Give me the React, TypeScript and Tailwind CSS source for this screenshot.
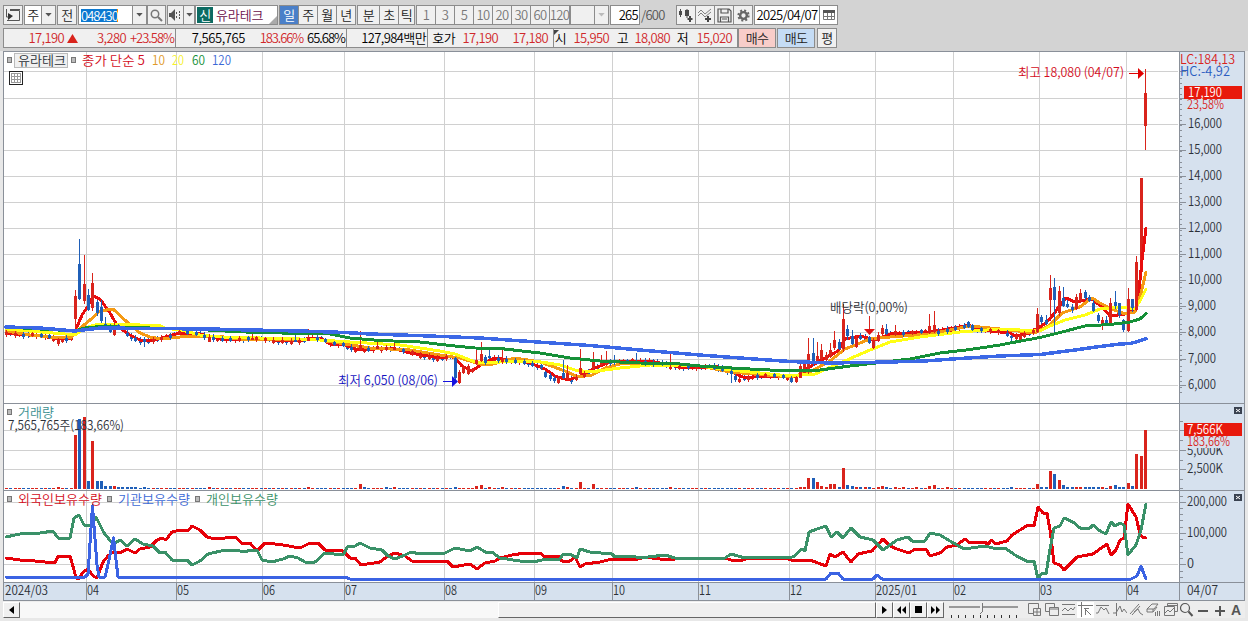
import React from "react";

type Pt = [number, number];
type Candle = [number, number, number, number, number, string];

const RED = "#d9241c";
const BLUE = "#1f5fb8";
const FONT = '"Noto Sans CJK KR", sans-serif';

const gridX = [86.5, 176.5, 262.5, 344.5, 444.5, 534.5, 612.5, 698.5, 789.5, 875.5, 953.5, 1039.5, 1126.5];
const priceY = [71.5, 98.5, 124.5, 150.5, 176.5, 202.5, 228.5, 254.5, 280.5, 306.5, 332.5, 359.5, 385.5];
const volumeY = [430.5, 450.5, 469.5];
const holdY = [502.5, 533.5, 564.5];
const months = ["04", "05", "06", "07", "08", "09", "10", "11", "12", "2025/01", "02", "03", "04"];

const ma5: Pt[] = [[6, 333], [40, 336], [60, 339], [70, 338], [76, 329], [82, 315], [88, 306], [93, 296], [100, 299], [110, 313], [118, 327], [130, 335], [140, 340], [150, 341], [165, 337], [180, 333], [200, 334], [220, 339], [250, 339], [300, 341], [310, 338], [320, 338], [330, 344], [345, 345], [355, 349], [375, 349], [392, 348], [410, 353], [440, 358], [450, 356], [456, 359], [462, 366], [472, 371], [482, 364], [495, 358], [510, 360], [530, 363], [545, 369], [555, 376], [568, 380], [580, 376], [595, 368], [610, 362], [650, 361], [680, 367], [700, 368], [715, 366], [730, 371], [745, 378], [760, 376], [790, 377], [800, 375], [808, 368], [825, 358], [838, 351], [845, 339], [860, 336], [875, 340], [890, 334], [930, 332], [960, 327], [968, 325], [980, 330], [1010, 333], [1015, 336], [1030, 333], [1043, 325], [1050, 319], [1058, 308], [1066, 298], [1075, 302], [1092, 299], [1102, 307], [1110, 316], [1125, 314], [1136, 310], [1139, 290], [1142, 260], [1146, 228]];
const ma10: Pt[] = [[6, 331], [30, 335], [50, 337], [70, 338], [78, 330], [90, 320], [100, 311], [113, 309], [127, 322], [140, 333], [150, 337], [162, 339], [180, 337], [215, 336], [240, 339], [300, 340], [320, 340], [345, 344], [370, 348], [410, 350], [440, 355], [460, 358], [480, 364], [490, 365], [500, 362], [515, 358], [540, 362], [565, 371], [578, 377], [592, 375], [605, 368], [620, 364], [640, 363], [700, 366], [730, 372], [790, 377], [810, 372], [830, 361], [845, 349], [860, 343], [870, 339], [890, 337], [930, 334], [970, 326], [1000, 329], [1035, 333], [1050, 325], [1062, 313], [1080, 307], [1092, 298], [1100, 303], [1112, 309], [1125, 314], [1135, 312], [1141, 293], [1146, 272]];
const ma20: Pt[] = [[6, 329], [40, 332], [65, 334], [75, 335], [85, 328], [95, 325], [110, 324], [140, 325], [158, 325], [165, 328], [185, 331], [200, 335], [220, 337], [300, 339], [320, 340], [350, 342], [400, 345], [440, 351], [455, 354], [475, 362], [490, 363], [510, 361], [535, 361], [560, 365], [575, 370], [590, 372], [620, 368], [650, 365], [700, 366], [740, 371], [790, 376], [815, 374], [840, 363], [870, 350], [890, 342], [920, 337], [960, 332], [1000, 329], [1020, 330], [1040, 331], [1050, 326], [1065, 320], [1085, 315], [1100, 309], [1120, 307], [1135, 309], [1141, 299], [1146, 289]];
const ma60: Pt[] = [[6, 327], [40, 329], [75, 331], [85, 328], [100, 326.5], [150, 328], [200, 329.5], [225, 331], [245, 332], [300, 333.5], [330, 334], [350, 338], [380, 340.5], [420, 342], [450, 345.5], [475, 348], [500, 348.5], [540, 353], [570, 358], [600, 361], [640, 363], [680, 364], [700, 366], [740, 368.5], [790, 371], [820, 370], [850, 366], [880, 362.5], [910, 359], [940, 353], [970, 349.5], [1000, 345], [1010, 343], [1040, 337.5], [1060, 332.5], [1085, 326], [1110, 324.5], [1130, 322], [1140, 319], [1146, 313.5]];
const ma120: Pt[] = [[6, 327], [40, 328], [75, 331], [100, 328], [150, 328.5], [210, 329], [250, 330], [300, 331], [345, 332.5], [370, 334], [430, 336], [480, 338], [530, 341.5], [590, 345.5], [640, 350], [700, 355], [740, 358], [790, 361.5], [830, 363], [890, 362], [925, 361], [960, 358.5], [1000, 356], [1040, 354.5], [1075, 350], [1100, 346.5], [1120, 344], [1130, 343.5], [1138, 341.5], [1146, 338.5]];

const foreign: Pt[] = [[6, 558], [20, 560], [35, 561], [55, 563], [58, 556], [70, 556], [74, 570], [76, 578], [79, 579], [83, 572], [88, 569], [93, 576], [97, 578], [103, 562], [108, 556], [113, 552], [120, 553], [127, 549], [135, 553], [140, 549], [150, 547], [157, 540], [162, 538], [166, 540], [172, 532], [180, 530], [188, 531], [192, 526], [200, 530], [207, 537], [215, 539], [235, 537], [243, 544], [250, 543], [257, 551], [265, 543], [275, 544], [283, 545], [300, 548], [310, 543], [318, 543], [325, 550], [343, 551], [350, 558], [355, 558], [361, 565], [380, 562], [388, 556], [395, 553], [405, 556], [412, 561], [430, 562], [447, 561], [453, 567], [470, 564], [477, 569], [485, 563], [495, 561], [500, 558], [512, 555], [525, 553], [540, 553], [545, 557], [558, 556], [562, 561], [570, 561], [575, 557], [580, 567], [585, 564], [600, 562], [612, 559], [635, 560], [645, 557], [660, 559], [675, 559], [690, 558], [725, 558], [731, 560], [743, 560], [748, 558], [785, 558], [795, 561], [810, 560], [826, 566], [830, 554], [835, 557], [843, 552], [851, 562], [858, 554], [872, 551], [883, 539], [890, 546], [897, 549], [909, 553], [915, 549], [926, 549], [930, 556], [940, 553], [947, 547], [957, 545], [965, 539], [970, 543], [985, 542], [988, 545], [991, 540], [996, 544], [1007, 541], [1012, 535], [1020, 530], [1028, 525], [1034, 526], [1038, 507], [1043, 513], [1047, 513], [1050, 530], [1054, 563], [1060, 565], [1064, 570], [1077, 557], [1093, 554], [1107, 544], [1111, 555], [1116, 550], [1120, 540], [1124, 538], [1128, 504], [1136, 517], [1140, 534], [1142, 537], [1146, 538]];
const personal: Pt[] = [[6, 537], [20, 534], [40, 533], [53, 531], [58, 538], [70, 538], [74, 518], [79, 515], [84, 525], [88, 526], [92, 524], [96, 517], [104, 533], [113, 544], [120, 540], [127, 546], [135, 539], [143, 544], [153, 546], [160, 553], [165, 552], [172, 560], [180, 561], [187, 560], [192, 565], [200, 561], [208, 554], [225, 550], [235, 550], [245, 552], [250, 550], [257, 550], [262, 560], [272, 562], [283, 559], [290, 556], [298, 558], [305, 562], [315, 562], [325, 553], [343, 555], [348, 546], [355, 546], [360, 543], [370, 548], [382, 550], [388, 556], [395, 559], [405, 555], [411, 552], [420, 554], [430, 553], [445, 553], [455, 548], [470, 551], [477, 547], [487, 553], [492, 552], [500, 558], [520, 561], [533, 562], [547, 559], [560, 559], [563, 554], [570, 554], [577, 558], [580, 549], [590, 552], [612, 554], [615, 557], [632, 556], [640, 558], [665, 555], [675, 558], [725, 558], [731, 554], [745, 558], [793, 557], [802, 549], [805, 551], [809, 532], [820, 528], [826, 526], [831, 537], [837, 532], [843, 538], [851, 528], [860, 537], [873, 540], [883, 550], [890, 545], [897, 540], [908, 537], [912, 541], [925, 541], [930, 533], [940, 535], [950, 541], [964, 549], [985, 546], [993, 548], [1005, 548], [1015, 555], [1028, 562], [1034, 561], [1038, 579], [1042, 573], [1046, 574], [1050, 549], [1054, 528], [1060, 526], [1064, 518], [1073, 522], [1080, 528], [1090, 528], [1093, 525], [1100, 531], [1106, 534], [1111, 522], [1115, 526], [1120, 523], [1124, 525], [1128, 555], [1136, 545], [1141, 530], [1146, 504]];
const institution: Pt[] = [[6, 577], [85, 577], [88, 574], [92.5, 506], [97, 565], [99, 577], [105, 577], [109, 560], [113.5, 538], [118, 577], [345, 577], [350, 579], [826, 579], [831, 573], [838, 573], [843, 579], [873, 579], [877, 575], [882, 579], [1131, 579], [1137, 576], [1141, 566], [1146, 579]];

// x, high, body top, body bottom, low, colour
const bigCandles: Candle[] = [
  [57, 338, 340, 344, 346, RED], [75.5, 290, 296, 319, 328, RED], [79.5, 239, 264, 299, 300, BLUE], [83.5, 255, 284, 301, 304, RED],
  [88.5, 289, 295, 310, 311, BLUE], [92.5, 273, 283, 308, 311, RED], [96.5, 300, 302, 313, 316, BLUE], [100.5, 300, 307, 321, 323, BLUE],
  [105.5, 317, 324, 329, 330, BLUE], [109.5, 324, 327, 332, 333, BLUE], [113.5, 321, 326, 335, 336, RED], [144.5, 337, 339, 342, 347, BLUE],
  [209, 334, 337, 342, 342, RED], [252, 333, 338, 340, 340, RED], [295, 335, 340, 342, 342, BLUE], [308, 329, 338, 341, 341, RED],
  [359, 331, 345, 350, 350, RED], [377, 342, 346, 349, 349, RED], [394, 342, 348, 350, 350, RED], [454.5, 357, 358, 378, 380, BLUE],
  [459, 370, 372, 383, 384, RED], [463.5, 365, 367, 373, 374, RED], [467.5, 364, 366, 374, 375, RED], [476, 347, 360, 364, 365, RED],
  [480.5, 342, 354, 361, 362, RED], [485, 355, 357, 363, 365, BLUE], [489.5, 347, 356, 358, 359, BLUE], [502.5, 348, 358, 362, 364, RED],
  [545, 371, 372, 377, 378, BLUE], [550, 373, 375, 379, 381, BLUE], [554, 376, 378, 381, 383, BLUE], [558, 376, 378, 383, 384, RED],
  [562.5, 360, 373, 378, 379, BLUE], [567, 365, 373, 379, 380, RED], [580, 349, 368, 374, 375, RED], [592.5, 352, 362, 369, 370, RED],
  [601, 355, 361, 365, 366, RED], [605.5, 351, 360, 365, 366, RED], [614, 355, 361, 363, 365, BLUE], [636, 353, 361, 363, 364, BLUE],
  [670, 354, 367, 369, 370, RED], [731.5, 368, 371, 374, 383, BLUE], [736, 374, 376, 380, 382, BLUE], [740, 377, 379, 382, 383, RED],
  [791.5, 376, 378, 382, 383, BLUE], [796, 376, 377, 382, 383, RED], [800, 363, 366, 378, 378, RED], [804, 361, 364, 373, 373, RED],
  [808.5, 338, 354, 372, 374, RED], [813, 338, 353, 362, 366, BLUE], [817, 342, 356, 363, 364, RED], [821.5, 344, 350, 359, 360, RED],
  [826, 352, 355, 360, 361, RED], [830, 343, 350, 357, 358, RED], [834.5, 331, 340, 348, 350, RED], [839, 339, 342, 349, 350, BLUE],
  [843.5, 304, 319, 349, 352, RED], [847.5, 325, 329, 336, 340, BLUE], [852, 330, 336, 344, 345, BLUE], [856, 335, 338, 347, 348, RED],
  [869, 336, 337, 343, 344, BLUE], [873, 338, 340, 348, 349, RED], [877.5, 332, 335, 341, 342, RED], [882, 325, 328, 334, 336, RED],
  [886.5, 324, 329, 334, 335, BLUE], [895, 325, 331, 335, 336, RED], [929.5, 314, 326, 333, 334, RED], [933.5, 311, 325, 332, 333, RED],
  [968, 321, 322, 327, 328, BLUE], [972, 324, 325, 330, 331, BLUE], [1012, 335, 336, 338, 342, BLUE], [1021, 334, 335, 340, 341, RED],
  [1037.5, 308, 314, 332, 333, RED], [1041.5, 315, 317, 322, 324, BLUE], [1046, 315, 320, 324, 325, BLUE], [1050.5, 275, 288, 300, 318, RED],
  [1054.5, 278, 287, 300, 334, BLUE], [1059, 286, 291, 313, 316, RED], [1063.5, 287, 298, 306, 307, BLUE], [1067.5, 300, 304, 307, 308, BLUE],
  [1072, 304, 307, 310, 313, BLUE], [1076, 294, 297, 309, 310, RED], [1080.5, 289, 293, 301, 303, RED], [1085, 290, 292, 298, 300, BLUE],
  [1089, 295, 297, 301, 302, BLUE], [1093.5, 300, 303, 311, 312, BLUE], [1097.5, 313, 315, 321, 323, BLUE], [1102, 317, 320, 325, 330, RED],
  [1106, 316, 320, 323, 324, BLUE], [1110.5, 298, 303, 323, 325, RED], [1115, 291, 302, 306, 309, BLUE], [1119, 303, 303, 315, 318, BLUE],
  [1123.5, 319, 320, 330, 332, BLUE], [1128, 288, 299, 331, 332, RED], [1132, 299, 299, 308, 312, BLUE], [1136.5, 256, 262, 310, 311, RED],
  [1141, 178, 178, 272, 272, RED], [1145.5, 69, 93, 126, 150, RED],
];

// x, top of the bar, colour
const bigVolumes: [number, number, string][] = [
  [75.5, 435, RED], [79.5, 419, BLUE], [83.5, 417, RED], [88.5, 481, BLUE], [92.5, 441, RED], [96.5, 481, BLUE], [100.5, 481, BLUE],
  [105, 486, BLUE], [109.5, 486, BLUE], [113.5, 486, RED], [118, 487, BLUE], [122, 487, BLUE], [127, 487, BLUE], [131, 487, BLUE], [135.5, 487, BLUE],
  [144.5, 487, BLUE], [57, 487, RED], [208, 487, RED], [308, 487, RED], [359.5, 484, RED], [364, 487, BLUE], [385, 487, BLUE], [394, 487, RED],
  [454.5, 487, BLUE], [476, 486, RED], [480.5, 485, RED], [489, 487, RED], [502.5, 487, RED], [562.5, 486, BLUE], [567, 487, RED], [580, 482, RED],
  [592.5, 484, RED], [636, 487, BLUE], [670, 487, RED], [800, 487, RED], [804, 487, RED], [808.5, 478, RED], [813, 478, BLUE], [817.5, 482, RED],
  [821.5, 486, RED], [826, 487, RED], [830.5, 484, RED], [834.5, 484, RED], [839, 487, BLUE], [843.5, 468, RED], [847.5, 485, BLUE], [852, 486, BLUE],
  [856, 487, RED], [860, 487, BLUE], [865, 487, RED], [869, 487, BLUE], [878, 487, RED], [882.5, 486, RED], [886.5, 487, BLUE], [895, 487, RED],
  [904, 487, RED], [916, 487, RED], [929.5, 486, RED], [933.5, 485, RED], [946, 487, RED], [1012, 487, BLUE], [1037.5, 484, RED], [1041.5, 487, BLUE],
  [1046, 487, BLUE], [1050.5, 471, RED], [1054.5, 474, BLUE], [1059, 480, RED], [1063.5, 485, BLUE], [1067.5, 487, BLUE], [1072, 487, BLUE],
  [1076, 487, RED], [1080.5, 487, RED], [1085, 487, BLUE], [1089, 487, BLUE], [1093.5, 487, BLUE], [1097.5, 487, BLUE], [1102, 487, RED],
  [1110.5, 486, RED], [1115, 485, BLUE], [1119, 487, BLUE], [1123.5, 487, BLUE], [1128, 483, RED], [1132, 486, BLUE], [1136.5, 454, RED],
  [1141, 456, RED], [1145.5, 430, RED],
];

const toIndex = (x: number) => Math.round((x - 6.5) / 4.3144);
const toX = (i: number) => Math.round(6 + i * 4.3144);

const at = (pts: Pt[], x: number) => {
  for (let i = 1; i < pts.length; i++) {
    if (x <= pts[i][0]) {
      const [x0, y0] = pts[i - 1];
      const [x1, y1] = pts[i];
      return y0 + ((x - x0) / (x1 - x0)) * (y1 - y0);
    }
  }
  return pts[pts.length - 1][1];
};

const bars = Array.from({ length: 265 }, (_, i) => {
  const x = toX(i);
  const r = (i * 7919 + 13) % 17;
  const color = r % 5 < 2 || at(ma5, x + 6) > at(ma5, x) + 1 ? BLUE : RED;
  const mid = Math.round(at(ma5, x) + (r % 3) - 1);
  const big = bigCandles.find((c) => toIndex(c[0]) === i);
  const candle = big || [x, mid - 2 - (r % 3), mid - 1, mid + 2, mid + 3 + (r % 2), color];
  const volume = bigVolumes.find((v) => toIndex(v[0]) === i) || [x, 488, candle[5]];
  return { x, big: !!big, candle: candle as Candle, volume: volume as [number, number, string] };
});

const Line = ({ pts, color, w = 3 }: { pts: Pt[]; color: string; w?: number }) => (
  <polyline points={pts.map((p) => p.join(",")).join(" ")} fill="none" stroke={color} strokeWidth={w} strokeLinejoin="round" strokeLinecap="round" />
);

type TxtProps = { x: number; y: number; w: number; color?: string; children: string };

const Txt = ({ x, y, w, color = "#2c3038", children }: TxtProps) => (
  <text x={x} y={y} textLength={w} lengthAdjust="spacingAndGlyphs" fill={color} fontSize={13} fontWeight={350} fontFamily={FONT}>
    {children}
  </text>
);

const Mark = ({ x, y }: { x: number; y: number }) => (
  <rect x={x + 0.5} y={y + 0.5} width={4} height={5} fill="#bbb" stroke="#777" shapeRendering="crispEdges" />
);

const Close = ({ y }: { y: number }) => (
  <g>
    <rect x={1234} y={y} width={8} height={7} fill="#39414f" />
    <path d={`M1236 ${y + 2}l4 3m0-3l-4 3`} stroke="#fff" />
  </g>
);

const Chart = () => (
  <svg width={1242} height={550} viewBox="3 51 1242 550" className="block overflow-visible">
    <rect x={3} y={51} width={1176} height={532} fill="#fff" />
    <rect x={1179} y={51} width={65} height={550} fill="#d6e1ee" />
    <rect x={3} y={583} width={1241} height={18} fill="#d6e1ee" />
    <g stroke="#d0d0d0" shapeRendering="crispEdges">
      {[...priceY, ...volumeY, ...holdY].map((y) => (
        <path key={y} d={`M4 ${y}H1178`} />
      ))}
      {gridX.map((x) => (
        <path key={x} d={`M${x} 52V582`} />
      ))}
    </g>
    <g stroke="#8a9099" shapeRendering="crispEdges">
      <path d="M3.5 51V601M3 51.5H1244M1244.5 51V601M1179.5 51V601M3 403.5H1244M3 490.5H1244M3 582.5H1244M3 600.5H1244" fill="none" />
      {gridX.map((x) => (
        <path key={x} d={`M${x} 583V600`} />
      ))}
      {[...priceY, ...volumeY, ...holdY].map((y) => (
        <path key={y} d={`M1180 ${y}H1186`} />
      ))}
      {Array.from({ length: 61 }, (_, i) => (
        <path key={i} d={`M1180 ${Math.round(78 + i * 5.23) + 0.5}h2`} />
      ))}
      {[421, 440, 460, 479, 488, 496, 508, 514, 520, 527, 539, 546, 552, 558, 571, 577].map((y) => (
        <path key={y} d={`M1180 ${y + 0.5}h3`} />
      ))}
    </g>

    <g shapeRendering="crispEdges">
      {bars.map(({ x, candle: [, high, top, bottom, low, color], volume }) => (
        <g key={x}>
          <rect x={x} y={high} width={1} height={low - high} fill={color} />
          <rect x={x - 1} y={top} width={3} height={bottom - top} fill={color} />
          <rect x={x - 1} y={volume[1]} width={3} height={489 - volume[1]} fill={volume[2]} />
        </g>
      ))}
    </g>

    <g shapeRendering="crispEdges">
      <Line pts={ma5} color="#e80d0d" />
      <Line pts={ma10} color="#f59a13" />
      <Line pts={ma20} color="#ffff14" />
    </g>
    {/* bodies stay visible over the short averages */}
    <g shapeRendering="crispEdges">
      {bars.map(({ x, big, candle: [, high, top, bottom, low, color] }, i) =>
        (big && i !== 263) || i % 2 === 0 ? (
          <g key={x}>
            <rect x={x} y={high} width={1} height={low - high} fill={color} />
            <rect x={x - 1} y={top} width={3} height={bottom - top} fill={color} />
          </g>
        ) : null
      )}
    </g>
    <g shapeRendering="crispEdges">
      <Line pts={ma60} color="#159038" />
      <Line pts={ma120} color="#3b68e6" w={3.5} />
      <Line pts={foreign} color="#e60008" />
      <Line pts={personal} color="#3a9168" />
      <Line pts={institution} color="#3b63e3" />
    </g>

    <Mark x={7} y={57} />
    <rect x={14.5} y={53.5} width={53} height={14} fill="#f0f0f0" stroke="#bbb" shapeRendering="crispEdges" />
    <Txt x={18} y={65} w={48}>유라테크</Txt>
    <Mark x={71} y={57} />
    <Txt x={82} y={65} w={63} color="#d30d22">종가 단순 5</Txt>
    <Txt x={152} y={65} w={13} color="#e09a28">10</Txt>
    <Txt x={172} y={65} w={12} color="#f5f02c">20</Txt>
    <Txt x={192} y={65} w={13} color="#159038">60</Txt>
    <Txt x={212} y={65} w={19} color="#3b68d6">120</Txt>
    <g stroke="#222" fill="none" shapeRendering="crispEdges">
      <rect x={9.5} y={71.5} width={13} height={13} strokeWidth={1} />
      <path d="M11 73.500h10M11 76.500h10M11 79.500h10M11 82.500h10M11.500 73v10M14.500 73v10M17.500 73v10M20.500 73v10" stroke="#999" />
    </g>

    <Txt x={1018} y={77} w={106} color="#d30d22">최고 18,080 (04/07)</Txt>
    <path d="M1129 73.5h10" stroke="#e00000" />
    <path d="M1138 68l6 5.5-6 5.5z" fill="#e00000" />
    <Txt x={338} y={385} w={100} color="#1512c0">최저 6,050 (08/06)</Txt>
    <path d="M443 381.5h10" stroke="#1512e0" />
    <path d="M452 376l6 5.5-6 5.5z" fill="#1512e0" />
    <Txt x={830} y={312} w={78}>배당락(0,00%)</Txt>
    <path d="M869.5 316v14" stroke="#d9241c" />
    <path d="M864 329h11l-5.500 6z" fill="#e01010" />

    <Txt x={1180} y={64} w={55} color="#d9241c">LC:184,13</Txt>
    <Txt x={1180} y={76} w={50} color="#2a5cc0">HC:-4,92</Txt>
    {["16,000", "15,000", "14,000", "13,000", "12,000", "11,000", "10,000"].map((t, i) => (
      <Txt key={t} x={1188} y={128 + i * 26} w={34}>{t}</Txt>
    ))}
    {["9,000", "8,000", "7,000", "6,000"].map((t, i) => (
      <Txt key={t} x={1188} y={[310, 336, 363, 389][i]} w={28}>{t}</Txt>
    ))}
    <rect x={1184} y={86} width={58} height={13} fill="#e8190c" />
    <Txt x={1188} y={97} w={34} color="#fff">17,190</Txt>
    <Txt x={1187} y={109} w={37} color="#d9241c">23,58%</Txt>

    <Mark x={7} y={409} />
    <Txt x={18} y={417} w={36} color="#3c9090">거래량</Txt>
    <Txt x={8} y={430} w={116}>7,565,765주(183,66%)</Txt>
    <Close y={407} />
    <Txt x={1187} y={455} w={36}>5,000K</Txt>
    <Txt x={1187} y={473} w={36}>2,500K</Txt>
    <rect x={1186} y={437} width={56} height={11} fill="#d6e1ee" />
    <rect x={1184} y={423} width={58} height={13} fill="#e8190c" />
    <Txt x={1187} y={434} w={36} color="#fff">7,566K</Txt>
    <Txt x={1187} y={446} w={43} color="#d9241c">183,66%</Txt>

    <Mark x={7} y={496} />
    <Txt x={18} y={504} w={84} color="#d30d22">외국인보유수량</Txt>
    <Mark x={107} y={496} />
    <Txt x={118} y={504} w={72} color="#3b68d6">기관보유수량</Txt>
    <Mark x={195} y={496} />
    <Txt x={206} y={504} w={72} color="#3a9168">개인보유수량</Txt>
    <Close y={494} />
    <Txt x={1187} y={506} w={40}>200,000</Txt>
    <Txt x={1187} y={537} w={40}>100,000</Txt>
    <Txt x={1187} y={568} w={7}>0</Txt>

    <Txt x={5} y={595} w={43}>2024/03</Txt>
    {months.map((m, i) => (
      <Txt key={gridX[i]} x={gridX[i] + 0.5} y={595} w={m.length > 2 ? 41 : 12}>{m}</Txt>
    ))}
    <Txt x={1187} y={595} w={31}>04/07</Txt>
  </svg>
);

const Down = ({ color = "#555" }: { color?: string }) => (
  <svg className="shrink-0" width={7} height={4} viewBox="0 0 8 5"><path d="M0 0h8L4 4.500z" fill={color} /></svg>
);

const cell = "flex h-full shrink-0 items-center justify-center border-r border-[#8c8c8c] last:border-r-0";
const group = "flex h-5 shrink-0 border border-[#8c8c8c] bg-[#f0f0f0]";

const TopBar = () => (
  <div className="flex h-5 items-center">
    <div className={`${group} w-5 items-center justify-center`}>
      <svg width={14} height={14} viewBox="0 0 14 14" fill="none" stroke="#555">
        <path d="M4 2.500h9.500v10H4" /><path d="M4 1.500h10M.5 1v6" /><path d="M2 5l5 3-5 4z" fill="#333" stroke="none" />
        <path d="M.5 7v2h2M1 12.500h3" />
      </svg>
    </div>
    <div className={`${group} ml-px w-8 bg-white`}>
      <div className={`${cell} w-[17px]`}>주</div>
      <div className={`${cell} w-[13px] bg-[#f0f0f0]`}><Down /></div>
    </div>
    <div className={`${group} ml-px w-5 items-center justify-center`}>전</div>
    <div className={`${group} ml-px w-[69px] bg-white`}>
      <div className={`${cell} w-[54px] !justify-start pl-0.5`}>
        <span className="h-[13px] w-[37px] border-r border-orange-400 bg-[#0b78d0] leading-[13px] tracking-[-1px] text-white">048430</span>
      </div>
      <div className={`${cell} w-[13px] bg-[#f0f0f0]`}><Down /></div>
    </div>
    <div className={`${group} w-[19px] items-center justify-center`}>
      <svg width={13} height={13} viewBox="0 0 13 13" fill="none" stroke="#777"><circle cx={5} cy={5} r={3.700} strokeWidth={1.500} /><path d="M8 8l4 4" strokeWidth={2} /></svg>
    </div>
    <div className={`${group} ml-px w-7`}>
      <div className={`${cell} w-4`}>
        <svg width={13} height={12} viewBox="0 0 13 12" fill="#555"><path d="M0 4h2l4-4v12L2 8H0zM7 3h1v2H7zM7 7h1v2H7zM10 2h1v2h-1zM10 5h1v2h-1zM10 8h1v2h-1z" /></svg>
      </div>
      <div className={`${cell} w-2.5`}><Down /></div>
    </div>
    <div className={`${group} relative w-[83px] items-center bg-white pl-px`}>
      <span className="flex h-4 w-4 items-center justify-center bg-[#0d6b62] text-white">신</span>
      <span className="ml-[3px] tracking-[-0.1px] text-[#6b0d4a]">유라테크</span>
      <svg className="absolute right-0 bottom-0" width={8} height={8}><path d="M8 0v8H0z" fill="#aaa" /></svg>
    </div>
    <div className={`${group} ml-px w-[77px]`}>
      <div className={`${cell} w-[19px] bg-[#4a7fc8] text-white`}>일</div>
      <div className={`${cell} w-[19px]`}>주</div>
      <div className={`${cell} w-[19px]`}>월</div>
      <div className={`${cell} w-[18px]`}>년</div>
    </div>
    <div className={`${group} ml-px w-[58px]`}>
      <div className={`${cell} w-[22px]`}>분</div>
      <div className={`${cell} w-[19px]`}>초</div>
      <div className={`${cell} w-[15px]`}>틱</div>
    </div>
    <div className={`${group} ml-px w-[154px] text-[#777]`}>
      {["1", "3", "5", "10", "20", "30", "60", "120"].map((n) => (
        <div key={n} className={`${cell} w-[19px]`}>{n}</div>
      ))}
    </div>
    <div className={`${group} w-[39px]`}>
      <div className={`${cell} w-6`} />
      <div className={`${cell} w-[13px]`}><Down color="#bbb" /></div>
    </div>
    <div className={`${group} ml-px w-[30px] items-center justify-end bg-white pr-px text-black`}>265</div>
    <span className="ml-px w-[35px] text-[#555]">/600</span>
    <div className={`${group} w-[77px]`}>
      <div className={`${cell} w-[19px]`}>
        <svg width={16} height={15} viewBox="0 0 16 15"><path d="M1 3h3v4H1zM7 2h4v6H7zM2 1h1v8H2zM8.500 1h1v9h-1zM11 8h2v6h-2zM9.500 10H14.500v2H9.500z" fill="#4a4a4a" /></svg>
      </div>
      <div className={`${cell} w-[19px]`}>
        <svg width={16} height={15} viewBox="0 0 16 15" fill="none" stroke="#666" strokeWidth={0.8}><path d="M1 5l3-3 4 4 6-5M1 8l3-3 4 4 6-5" /><path d="M8 11h6M11 8v6" stroke="#444" strokeWidth={2} /></svg>
      </div>
      <div className={`${cell} w-[19px]`}>
        <svg width={15} height={15} viewBox="0 0 15 15" fill="none" stroke="#555" strokeWidth={1.200}><path d="M1 1h11l2 2v11H1zM4 1v4h7V1M3.500 14V9h8v5M5 11h5" /></svg>
      </div>
      <div className={`${cell} w-[18px]`}>
        <svg width={13} height={13} viewBox="-7 -7 14 14" fill="none" stroke="#666"><circle r={3.600} strokeWidth={2.600} /><circle r={5.500} strokeWidth={2.200} strokeDasharray="2.160" /></svg>
      </div>
    </div>
    <div className={`${group} ml-px w-[84px] bg-white`}>
      <div className={`${cell} w-[65px] tracking-[-0.65px] text-black`}>2025/04/07</div>
      <div className={`${cell} w-[17px]`}>
        <svg width={12} height={10} viewBox="0 0 12 10" fill="none" stroke="#777"><path d="M.5.5h11v9H.5zM4.500 3v7M8.500 3v7M1 6.500h10" /><path d="M0 1.500h12" stroke="#555" strokeWidth={3} /></svg>
      </div>
    </div>
  </div>
);

const Num = ({ w, red, children }: { w: string; red?: boolean; children: React.ReactNode }) => (
  <span className={`shrink-0 text-right ${w} ${red ? "text-[#d0282a]" : "text-black"}`}>{children}</span>
);

const QuoteBar = () => (
  <div className="mt-[3px] flex h-5 items-center tracking-[-0.6px]">
    <div className="flex h-5 w-[735px] items-center border border-[#8c8c8c] bg-[#f0f0f0]">
      <div className={`${cell} w-[172px] !justify-start`}>
        <Num w="w-[60px]" red>17,190</Num>
        <svg className="ml-[3px] shrink-0" width={11} height={9}><path d="M0 9L5.500 0 11 9z" fill="#d9241c" /></svg>
        <Num w="w-[48px]" red>3,280</Num>
        <Num w="w-[48px]" red><span className="tracking-[-1px]">+23.58%</span></Num>
      </div>
      <div className={`${cell} w-[171px] !justify-start`}>
        <Num w="w-[69px]"><span className="tracking-[-0.4px]">7,565,765</span></Num>
        <Num w="w-[58px]" red><span className="tracking-[-1.1px]">183.66%</span></Num>
        <Num w="w-[42px]"><span className="tracking-[-1px]">65.68%</span></Num>
      </div>
      <div className={`${cell} w-[81px] !justify-end pr-px text-black`}>127,984백만</div>
      <div className={`${cell} w-[126px] !justify-start`}>
        <Num w="w-[27px]">호가</Num>
        <Num w="w-[43px]" red>17,190</Num>
        <Num w="w-[50px]" red>17,180</Num>
      </div>
      <div className={`${cell} relative w-[182px] !justify-start`}>
        <svg className="absolute top-px left-0" width={5} height={5}><path d="M0 0h5L0 5z" fill="#444" /></svg>
        <Num w="w-[12px]">시</Num>
        <Num w="w-[43px]" red>15,950</Num>
        <Num w="w-[19px]">고</Num>
        <Num w="w-[42px]" red>18,080</Num>
        <Num w="w-[18px]">저</Num>
        <Num w="w-[44px]" red>15,020</Num>
      </div>
    </div>
    <div className="flex h-5 w-[38px] items-center justify-center border border-[#8c8c8c] bg-[#f8cdc9]">매수</div>
    <div className="ml-px flex h-5 w-[38px] items-center justify-center border border-[#8c8c8c] bg-[#c5dcf5]">매도</div>
    <div className="ml-0.5 flex h-5 w-5 items-center justify-center border border-[#8c8c8c] bg-[#f0f0f0]">평</div>
  </div>
);

const key = "flex h-4 w-[17px] shrink-0 items-center justify-center border border-t-white border-r-[#666] border-b-[#666] border-l-white bg-[#f0f0f0]";

const tools = [
  "M6 11.500H1.500v-10h10V6M6.500 6.500h7v7h-7zM10 7v7M7 10h7",
  "M5 9.500H1.500v-8h9V5M5.500 5.500h9v8h-9zM5.500 7h9",
  "M1 2.500h13M1 12.500h13M1 9l3-3 3 3 3-3 2 2 2-3",
  "M0 3.500h15M3.500 0v15M7.500 6v7M8 8l5 5M6 6.500h5",
  "M1 3.500h13M1 11h2l3-6 3 3 2-2 3 6",
  "M4.500 1v13M1 11h3l4-7 2 6 2-3 3 4",
  "M1 12L10 2M3 13l8-9M5 10l4-3 2 4 3 2",
  "M1 7l5-5h6l-4 5zM1 7v3h6V7M7 10l4-5M9.500 10v4M11.500 9v5M13.500 9v5",
  "M4.500 3.500v-2h10v8h-3M1.500 4.500h10v9h-10zM2 11l3-3 2 2 4-4M4 3.500h10",
];

const BottomBar = () => (
  <div className="flex h-[17px] w-[1242px] items-center bg-[#ededed]">
    <div className={key}><svg width={5} height={8}><path d="M5 0v8L0 4z" /></svg></div>
    <div className="h-4 w-[478px] bg-[#f8f8f8]" />
    <div className="h-4 w-[378px] border border-t-white border-r-[#666] border-b-[#666] border-l-white bg-[#f0f0f0]" />
    <div className={key}><svg width={5} height={8}><path d="M0 0v8l5-4z" /></svg></div>
    <div className={key}><svg width={9} height={8}><path d="M4 0v8L0 4zM9 0v8L5 4z" /></svg></div>
    <div className={key}><svg width={7} height={7}><path d="M0 0h7v7H0z" /></svg></div>
    <div className={key}><svg width={9} height={8}><path d="M0 0v8l4-4zM5 0v8l4-4z" /></svg></div>
    <svg className="ml-[5px] shrink-0" width={70} height={17} shapeRendering="crispEdges">
      <path d="M0 6h69" stroke="#999" strokeWidth={2} />
      <path d="M31 2h2v8l-1 2-1-2z" fill="#eee" />
      <path d="M33.500 2v8l-2 3" fill="none" stroke="#777" />
      {Array.from({ length: 10 }, (_, i) => (
        <path key={i} d={`M${2.5 + i * 7.2} 14v3`} stroke="#333" />
      ))}
    </svg>
    <div className="ml-[7px] flex shrink-0">
      {tools.map((d, i) => (
        <div key={d} className={`flex h-4 w-[17px] items-center justify-center ${i === 3 ? "bg-white" : ""}`}>
          <svg width={15} height={15} viewBox="0 0 15 15" fill="none" stroke="#777" strokeWidth={1}><path d={d} /></svg>
        </div>
      ))}
    </div>
    <svg className="shrink-0" width={48} height={16} fill="none" stroke="#555">
      <circle cx={6} cy={6} r={4.500} strokeWidth={1.200} /><path d="M9.500 9.500l4 4.500M19 9h10M36 9h10M41 4v10" strokeWidth={2} />
    </svg>
    <span className="w-[18px] shrink-0 text-center font-['Liberation_Sans',sans-serif] text-sm font-bold text-[#555]">A</span>
  </div>
);

export default function App() {
  return (
    <div className="h-[621px] w-[1248px] overflow-hidden bg-[#e8e8e8] font-['Noto_Sans_CJK_KR',sans-serif] text-[13px] leading-4 font-[350] tracking-[-0.7px] whitespace-nowrap text-[#222]">
      <div className="h-[51px] bg-[#d3d3d3] pt-[5px] pl-[3px]">
        <TopBar />
        <QuoteBar />
      </div>
      <div className="pl-[3px] tracking-normal">
        <Chart />
        <BottomBar />
      </div>
    </div>
  );
}
